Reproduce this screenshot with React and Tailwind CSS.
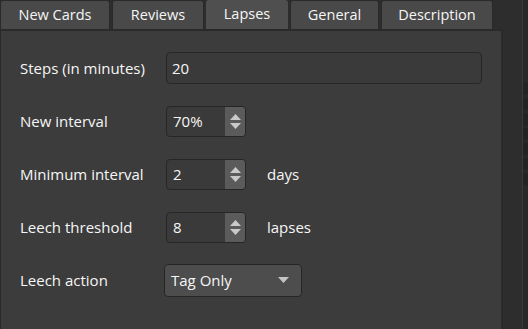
import React from 'react';

const tabs = [
  { label: 'New Cards', w: 'w-[110px]' },
  { label: 'Reviews', w: 'w-[92px]' },
  { label: 'Lapses', w: 'w-[82px]', active: true },
  { label: 'General', w: 'w-[89px]' },
  { label: 'Description', w: 'w-[112px]' },
];

function Arrows() {
  return (
    <div className="flex w-[20px] flex-col items-center justify-center gap-[3px] bg-[#5b5b5b]">
      <svg width="11" height="6" viewBox="0 0 11 6">
        <path d="M0 6 L5.5 0 L11 6 Z" fill="#c9c9c9" />
      </svg>
      <svg width="11" height="6" viewBox="0 0 11 6">
        <path d="M0 0 L11 0 L5.5 6 Z" fill="#c9c9c9" />
      </svg>
    </div>
  );
}

function SpinBox({ value }) {
  return (
    <div className="flex h-[31px] w-[80px] overflow-hidden rounded-[4px] border border-[#262626] bg-[#3a3a3a]">
      <div className="flex flex-1 items-center pl-[6px]">{value}</div>
      <Arrows />
    </div>
  );
}

function Row({ label, children }) {
  return (
    <div className="flex h-[32px] items-center">
      <div className="w-[146px]">{label}</div>
      {children}
    </div>
  );
}

export default function App() {
  return (
    <div
      className="flex h-[329px] w-[528px] overflow-hidden bg-[#2d2d2d] text-[15px] text-[#f6f6f6]"
      style={{ fontFamily: '"Open Sans", "Noto Sans", sans-serif' }}
    >
      <div className="flex w-[503px] flex-col">
        <div className="flex h-[29px] gap-[2px] text-[14.5px]">
          {tabs.map((t) =>
            t.active ? (
              <div
                key={t.label}
                className={`${t.w} -mb-[2px] flex items-center justify-center rounded-t-[3px] bg-[#4f4f4f] pb-[3px]`}
              >
                {t.label}
              </div>
            ) : (
              <div
                key={t.label}
                className={`${t.w} flex items-center justify-center rounded-t-[3px] border border-b-0 border-[#2a2a2a] bg-[#494949] pb-[1px]`}
              >
                {t.label}
              </div>
            )
          )}
        </div>
        <div className="flex flex-1 flex-col gap-[21px] border-t-2 border-l border-r-2 border-[#2a2a2a] bg-[#3c3c3c] pl-[19px] pt-[21px]">
          <Row label="Steps (in minutes)">
            <div className="flex h-[32px] w-[316px] items-center rounded-[4px] border border-[#262626] bg-[#3a3a3a] pl-[5px]">
              20
            </div>
          </Row>
          <Row label="New interval">
            <SpinBox value="70%" />
          </Row>
          <Row label="Minimum interval">
            <SpinBox value="2" />
            <span className="ml-[21px]">days</span>
          </Row>
          <Row label="Leech threshold">
            <SpinBox value="8" />
            <span className="ml-[21px]">lapses</span>
          </Row>
          <Row label="Leech action">
            <div className="-ml-[2px] flex h-[33px] w-[138px] items-center justify-between rounded-[4px] border border-[#262626] bg-[#4d4d4d] pl-[6px] pr-[12px]">
              <span>Tag Only</span>
              <svg width="11" height="6" viewBox="0 0 11 6">
                <path d="M0 0 L11 0 L5.5 6 Z" fill="#c4c4c4" />
              </svg>
            </div>
          </Row>
        </div>
      </div>
      <div className="flex flex-1">
        <div className="w-[19px]" />
        <div className="w-[1px] bg-[#3a3a3a]" />
        <div className="flex flex-1 flex-col bg-[#282828] pt-[83px]">
          <div className="h-[12px] bg-[#232323]" />
          <div className="h-[3px]" />
          <div className="h-[12px] bg-[#232323]" />
          <div className="h-[3px]" />
          <div className="h-[12px] bg-[#232323]" />
          <div className="h-[3px]" />
          <div className="h-[12px] bg-[#232323]" />
          <div className="h-[3px]" />
          <div className="h-[12px] bg-[#232323]" />
          <div className="h-[3px]" />
          <div className="h-[12px] bg-[#232323]" />
          <div className="h-[3px]" />
          <div className="h-[12px] bg-[#232323]" />
        </div>
      </div>
    </div>
  );
}
